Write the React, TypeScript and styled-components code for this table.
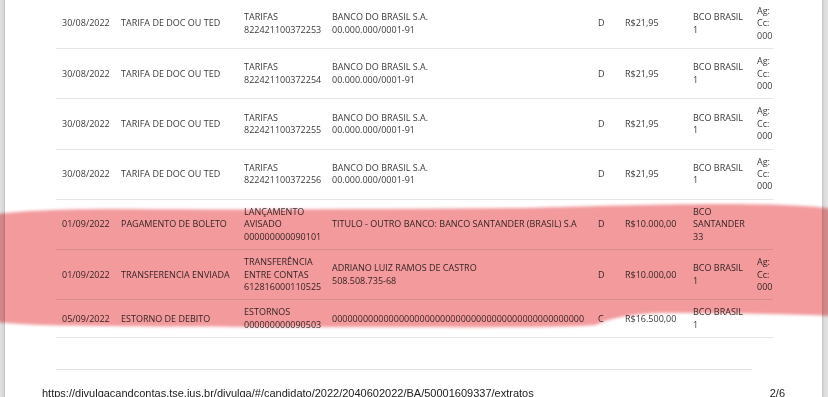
import React from 'react'
import styled, { createGlobalStyle } from 'styled-components'

const GlobalStyle = createGlobalStyle`
  html, body {
    margin: 0;
    padding: 0;
    background: #fff;
    overflow: hidden;
  }
`

const Frame = styled.div`
  position: relative;
  display: flex;
  width: 828px;
  height: 397px;
  overflow: hidden;
  background: #fff;
`

const Gutter = styled.div<{ $side: 'left' | 'right' }>`
  flex: 0 0 ${(p) => (p.$side === 'left' ? '5px' : '6px')};
  background: ${(p) =>
    p.$side === 'left'
      ? 'linear-gradient(to right, #e2e2e2 0%, #d6d6d6 70%, #bdbdbd 100%)'
      : 'linear-gradient(to right, #c6c6c6 0%, #dcdcdc 40%, #e4e4e4 100%)'};
`

const Sheet = styled.div`
  flex: 1;
  display: flex;
  flex-direction: column;
  padding-left: 51px;
  min-width: 0;
  overflow: hidden;

  & > * {
    flex-shrink: 0;
  }
`

const TableWrap = styled.div`
  width: 717px;
  margin-top: -1px;
  overflow: hidden;
  font-family: 'Open Sans', 'Noto Sans', sans-serif;
  font-size: 9px;
  color: #3b3b3b;
`

const Row = styled.div`
  display: grid;
  grid-template-columns: 59px 123px 88px 266px 27px 68px 64px 40px;
  border-bottom: 1px solid #e6e6e6;
  padding: 6px 0;
`

const Cell = styled.div`
  display: flex;
  flex-direction: column;
  justify-content: center;
  padding-left: 6px;
  line-height: 12.4px;
  white-space: nowrap;
`

const Divider = styled.div`
  width: 696px;
  height: 1px;
  margin-top: 31px;
  background: #e2e2e2;
`

const Footer = styled.div`
  display: flex;
  justify-content: space-between;
  width: 743px;
  margin-top: 17px;
  margin-left: -14px;
  font-family: 'Liberation Sans', Arial, sans-serif;
  font-size: 11px;
  line-height: 13px;
  color: #222;
`

const Highlight = styled.svg`
  position: absolute;
  left: 0;
  top: 0;
  width: 828px;
  height: 397px;
  pointer-events: none;
  mix-blend-mode: multiply;
`

type Entry = {
  date: string
  desc: string
  doc: string[]
  party: string[]
  kind: string
  value: string
  bank: string[]
  agency: string[]
}

const tarifa = (n: string): Entry => ({
  date: '30/08/2022',
  desc: 'TARIFA DE DOC OU TED',
  doc: ['TARIFAS', n],
  party: ['BANCO DO BRASIL S.A.', '00.000.000/0001-91'],
  kind: 'D',
  value: 'R$21,95',
  bank: ['BCO BRASIL', '1'],
  agency: ['Ag:', 'Cc:', '000'],
})

const entries: Entry[] = [
  tarifa('822421100372253'),
  tarifa('822421100372254'),
  tarifa('822421100372255'),
  tarifa('822421100372256'),
  {
    date: '01/09/2022',
    desc: 'PAGAMENTO DE BOLETO',
    doc: ['LANÇAMENTO', 'AVISADO', '000000000090101'],
    party: ['TITULO - OUTRO BANCO: BANCO SANTANDER (BRASIL) S.A'],
    kind: 'D',
    value: 'R$10.000,00',
    bank: ['BCO', 'SANTANDER', '33'],
    agency: [],
  },
  {
    date: '01/09/2022',
    desc: 'TRANSFERENCIA ENVIADA',
    doc: ['TRANSFERÊNCIA', 'ENTRE CONTAS', '612816000110525'],
    party: ['ADRIANO LUIZ RAMOS DE CASTRO', '508.508.735-68'],
    kind: 'D',
    value: 'R$10.000,00',
    bank: ['BCO BRASIL', '1'],
    agency: ['Ag:', 'Cc:', '000'],
  },
  {
    date: '05/09/2022',
    desc: 'ESTORNO DE DEBITO',
    doc: ['ESTORNOS', '000000000090503'],
    party: ['0'.repeat(49)],
    kind: 'C',
    value: 'R$16.500,00',
    bank: ['BCO BRASIL', '1'],
    agency: [],
  },
]

const Lines = ({ lines }: { lines: string[] }) => (
  <Cell>
    {lines.map((l, idx) => (
      <span key={idx}>{l}</span>
    ))}
  </Cell>
)

const App = () => {
  return (
    <>
      <GlobalStyle />
      <Frame>
        <Gutter $side="left" />
        <Sheet>
          <TableWrap>
            {entries.map((e, idx) => (
              <Row key={idx}>
                <Cell>{e.date}</Cell>
                <Cell>{e.desc}</Cell>
                <Lines lines={e.doc} />
                <Lines lines={e.party} />
                <Cell>{e.kind}</Cell>
                <Cell>{e.value}</Cell>
                <Lines lines={e.bank} />
                <Lines lines={e.agency} />
              </Row>
            ))}
          </TableWrap>
          <Divider />
          <Footer>
            <span>https://divulgacandcontas.tse.jus.br/divulga/#/candidato/2022/2040602022/BA/50001609337/extratos</span>
            <span>2/6</span>
          </Footer>
        </Sheet>
        <Gutter $side="right" />

        {/* marker stroke drawn over the printed page */}
        <Highlight viewBox="0 0 828 397">
          <defs>
            <filter id="soft" x="-5%" y="-20%" width="110%" height="140%">
              <feGaussianBlur stdDeviation="1.6" />
            </filter>
          </defs>
          <path
            filter="url(#soft)"
            fill="#f29a9c"
            d="M-4 214 C 20 211, 60 209, 120 209 C 250 210, 400 209, 520 208
               C 600 206, 660 204, 740 204 C 790 205, 815 206, 832 209
               L 832 316 C 800 314, 720 313, 660 313 C 630 314, 610 318, 596 325
               C 560 328, 470 327, 380 327 C 250 327, 120 327, 40 325
               C 20 324, 5 323, -4 322 Z"
          />
        </Highlight>
      </Frame>
    </>
  )
}

export default App
